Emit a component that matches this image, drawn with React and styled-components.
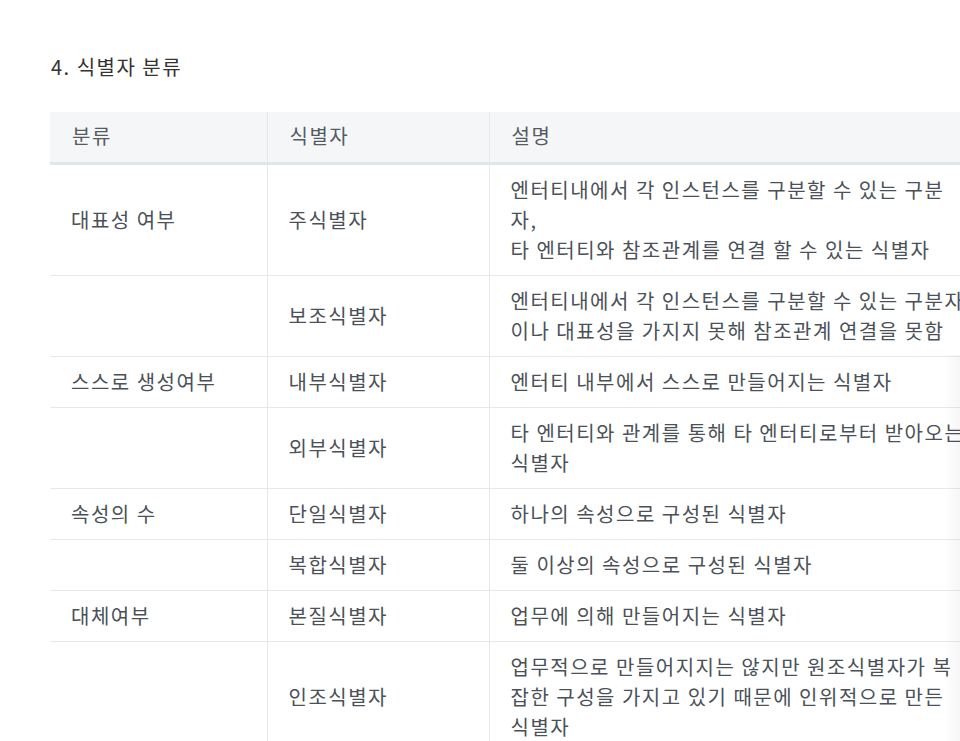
import React from 'react'
import styled, { createGlobalStyle } from 'styled-components';

const GlobalStyle = createGlobalStyle`
  html, body {
    margin: 0;
    padding: 0;
    background: #fff;
    overflow: hidden;
  }
  body {
    font-family: 'Noto Sans CJK KR', 'Noto Sans', sans-serif;
  }
`

const Page = styled.div`
  position: relative;
  padding: 52px 0 0 50px;
  width: 960px;
  height: 741px;
  box-sizing: border-box;
  overflow: hidden;
`

const Heading = styled.h4`
  margin: 0 0 30px 1px;
  font-size: 20px;
  font-weight: 400;
  line-height: 30px;
  letter-spacing: 1.5px;
  color: #333;
`

const Table = styled.table`
  border-collapse: collapse;
  table-layout: fixed;
  width: 960px;
  font-size: 20px;
  line-height: 30px;
  letter-spacing: 1.5px;
  color: #4b5158;
`

const HeadCell = styled.th`
  box-sizing: border-box;
  width: ${props => props.$w ? `${props.$w}px` : 'auto'};
  background: #f5f6f8;
  font-weight: 400;
  text-align: left;
  padding: 9px 21px 11px 22px;
  color: #555b62;
  border-bottom: 3px solid #e2e6ea;
  border-left: ${props => props.$first ? 'none' : '1px solid #e6e9ec'};
`

const Row = styled.tr`
  border-bottom: 1px solid #e6e9ec;
`

const Cell = styled.td`
  padding: 10px 21px 10px 21px;
  vertical-align: middle;
  white-space: nowrap;
  border-left: ${props => props.$first ? 'none' : '1px solid #e6e9ec'};
`

const EdgeShade = styled.div`
  position: absolute;
  top: 355px;
  right: 0;
  bottom: 0;
  width: 16px;
  background: linear-gradient(to right, rgba(0, 0, 0, 0), rgba(0, 0, 0, 0.035));
  pointer-events: none;
`

const rows = [
  { group: '대표성 여부', name: '주식별자', desc: ['엔터티내에서 각 인스턴스를 구분할 수 있는 구분', '자,', '타 엔터티와 참조관계를 연결 할 수 있는 식별자'] },
  { group: '', name: '보조식별자', desc: ['엔터티내에서 각 인스턴스를 구분할 수 있는 구분자', '이나 대표성을 가지지 못해 참조관계 연결을 못함'] },
  { group: '스스로 생성여부', name: '내부식별자', desc: ['엔터티 내부에서 스스로 만들어지는 식별자'] },
  { group: '', name: '외부식별자', desc: ['타 엔터티와 관계를 통해 타 엔터티로부터 받아오는', '식별자'] },
  { group: '속성의 수', name: '단일식별자', desc: ['하나의 속성으로 구성된 식별자'] },
  { group: '', name: '복합식별자', desc: ['둘 이상의 속성으로 구성된 식별자'] },
  { group: '대체여부', name: '본질식별자', desc: ['업무에 의해 만들어지는 식별자'] },
  { group: '', name: '인조식별자', desc: ['업무적으로 만들어지지는 않지만 원조식별자가 복', '잡한 구성을 가지고 있기 때문에 인위적으로 만든', '식별자'] },
];

const App = () => {
  return (
    <Page>
      <GlobalStyle />
      <Heading>4. 식별자 분류</Heading>
      <Table>
        <thead>
          <tr>
            <HeadCell $first $w={217}>분류</HeadCell>
            <HeadCell $w={222}>식별자</HeadCell>
            <HeadCell>설명</HeadCell>
          </tr>
        </thead>
        <tbody>
          {rows.map((row, index) => (
            <Row key={index}>
              <Cell $first>{row.group}</Cell>
              <Cell>{row.name}</Cell>
              <Cell>
                {row.desc.map((line, i) => (
                  <React.Fragment key={i}>
                    {i > 0 && <br />}
                    {line}
                  </React.Fragment>
                ))}
              </Cell>
            </Row>
          ))}
        </tbody>
      </Table>
      <EdgeShade />
    </Page>
  );
}

export default App
